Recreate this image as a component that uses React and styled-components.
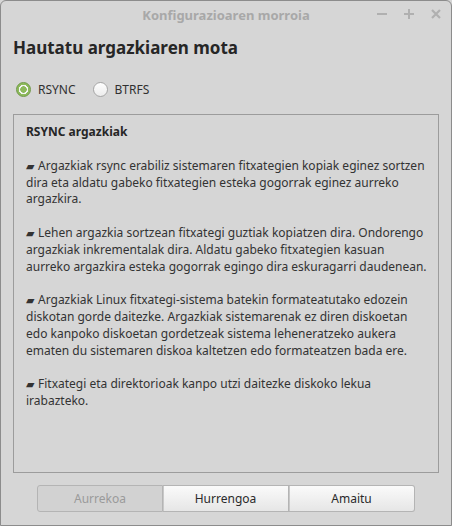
import React, { useState } from "react";
import styled, { createGlobalStyle } from "styled-components";

const GlobalStyle = createGlobalStyle`
  html, body {
    margin: 0;
    padding: 0;
    background: #d6d6d6;
  }
  body {
    font-family: "Noto Sans", "Open Sans", sans-serif;
  }
`;

const Window = styled.div`
  box-sizing: border-box;
  width: 452px;
  height: 526px;
  background: #d6d6d6;
  border: 1px solid #8c8c8c;
  border-radius: 6px 6px 0 0;
  display: flex;
  flex-direction: column;
  overflow: hidden;
`;

const TitleBar = styled.div`
  flex-shrink: 0;
  height: 27px;
  position: relative;
  display: flex;
  align-items: center;
  justify-content: center;
`;

const Title = styled.div`
  font-size: 13px;
  font-weight: bold;
  color: #a8a8a8;
`;

const WinControls = styled.div`
  position: absolute;
  right: 6px;
  top: 4px;
  display: flex;
  gap: 9px;
`;

const WinButton = styled.span`
  width: 18px;
  height: 18px;
  display: flex;
  align-items: center;
  justify-content: center;
  color: #b0b0b0;
`;

const Content = styled.div`
  flex: 1;
  min-height: 0;
  display: flex;
  flex-direction: column;
  padding: 8px 12px 13px 12px;
`;

const Heading = styled.h1`
  margin: 0;
  font-size: 17px;
  font-weight: bold;
  color: #262626;
  line-height: 24px;
`;

const RadioRow = styled.div`
  display: flex;
  gap: 17px;
  margin-top: 21px;
  padding-left: 3px;
`;

const RadioLabel = styled.label`
  display: flex;
  align-items: center;
  gap: 7px;
  font-size: 12px;
  line-height: 17px;
  color: #303030;
  cursor: pointer;
`;

const RadioCircle = styled.span`
  box-sizing: border-box;
  width: 15px;
  height: 15px;
  border-radius: 50%;
  border: 1px solid ${(p) => (p.checked ? "#6f9846" : "#a6a6a6")};
  background: ${(p) =>
    p.checked
      ? "radial-gradient(circle, #8dba5c 0 3px, #f4f4f4 3.5px 4.5px, #8dba5c 5px)"
      : "linear-gradient(#ffffff, #ececec)"};
`;

const InfoBox = styled.div`
  margin-top: 16px;
  flex: 1;
  min-height: 0;
  border: 1px solid #9c9c9c;
  padding: 9px 4px 8px 12px;
  color: #333333;
  font-size: 12px;
  line-height: 16.8px;
`;

const BoxTitle = styled.div`
  font-weight: bold;
  color: #262626;
  margin-bottom: 17px;
`;

const Para = styled.p`
  margin: 0 0 16.8px 0;
`;

const Line = styled.span`
  display: block;
  white-space: nowrap;
`;

const Bullet = styled.span`
  font-size: 10.5px;
  margin-right: 4px;
`;

const ButtonBar = styled.div`
  flex-shrink: 0;
  display: flex;
  justify-content: center;
  margin-top: 12px;
`;

const NavButton = styled.button`
  width: 126px;
  height: 27px;
  font-family: inherit;
  font-size: 12px;
  border: 1px solid #b4b4b4;
  border-left-width: ${(p) => (p.$first ? "1px" : "0")};
  border-radius: ${(p) =>
    p.$first ? "3px 0 0 3px" : p.$last ? "0 3px 3px 0" : "0"};
  color: ${(p) => (p.disabled ? "#9a9a9a" : "#2a2a2a")};
  background: ${(p) =>
    p.disabled ? "#d2d2d2" : "linear-gradient(#fafafa, #e6e6e6)"};
  box-shadow: ${(p) => (p.disabled ? "none" : "inset 1px 0 0 #c8c8c8")};
  padding: 0;
`;

const paragraphs = [
  [
    "Argazkiak rsync erabiliz sistemaren fitxategien kopiak eginez sortzen",
    "dira eta aldatu gabeko fitxategien esteka gogorrak eginez aurreko",
    "argazkira.",
  ],
  [
    "Lehen argazkia sortzean fitxategi guztiak kopiatzen dira. Ondorengo",
    "argazkiak inkrementalak dira. Aldatu gabeko fitxategien kasuan",
    "aurreko argazkira esteka gogorrak egingo dira eskuragarri daudenean.",
  ],
  [
    "Argazkiak Linux fitxategi-sistema batekin formateatutako edozein",
    "diskotan gorde daitezke. Argazkiak sistemarenak ez diren diskoetan",
    "edo kanpoko diskoetan gordetzeak sistema leheneratzeko aukera",
    "ematen du sistemaren diskoa kaltetzen edo formateatzen bada ere.",
  ],
  [
    "Fitxategi eta direktorioak kanpo utzi daitezke diskoko lekua",
    "irabazteko.",
  ],
];

const App = () => {
  const [mode, setMode] = useState("rsync");

  return (
    <>
      <GlobalStyle />
      <Window>
        <TitleBar>
          <Title>Konfigurazioaren morroia</Title>
          <WinControls>
            <WinButton>
              <svg width="12" height="12" viewBox="0 0 12 12">
                <rect x="1" y="5" width="10" height="2" fill="currentColor" />
              </svg>
            </WinButton>
            <WinButton>
              <svg width="12" height="12" viewBox="0 0 12 12">
                <rect x="1" y="5" width="10" height="2" fill="currentColor" />
                <rect x="5" y="1" width="2" height="10" fill="currentColor" />
              </svg>
            </WinButton>
            <WinButton>
              <svg width="12" height="12" viewBox="0 0 12 12">
                <path d="M2 2 L10 10 M10 2 L2 10" stroke="currentColor" strokeWidth="2.2" />
              </svg>
            </WinButton>
          </WinControls>
        </TitleBar>
        <Content>
          <Heading>Hautatu argazkiaren mota</Heading>
          <RadioRow>
            <RadioLabel onClick={() => setMode("rsync")}>
              <RadioCircle checked={mode === "rsync"} />
              RSYNC
            </RadioLabel>
            <RadioLabel onClick={() => setMode("btrfs")}>
              <RadioCircle checked={mode === "btrfs"} />
              BTRFS
            </RadioLabel>
          </RadioRow>
          <InfoBox>
            <BoxTitle>RSYNC argazkiak</BoxTitle>
            {paragraphs.map((lines, i) => (
              <Para key={i}>
                {lines.map((l, j) => (
                  <Line key={j}>
                    {j === 0 && <Bullet>▰</Bullet>}
                    {l}
                  </Line>
                ))}
              </Para>
            ))}
          </InfoBox>
          <ButtonBar>
            <NavButton $first disabled>Aurrekoa</NavButton>
            <NavButton>Hurrengoa</NavButton>
            <NavButton $last>Amaitu</NavButton>
          </ButtonBar>
        </Content>
      </Window>
    </>
  );
};

export default App;
